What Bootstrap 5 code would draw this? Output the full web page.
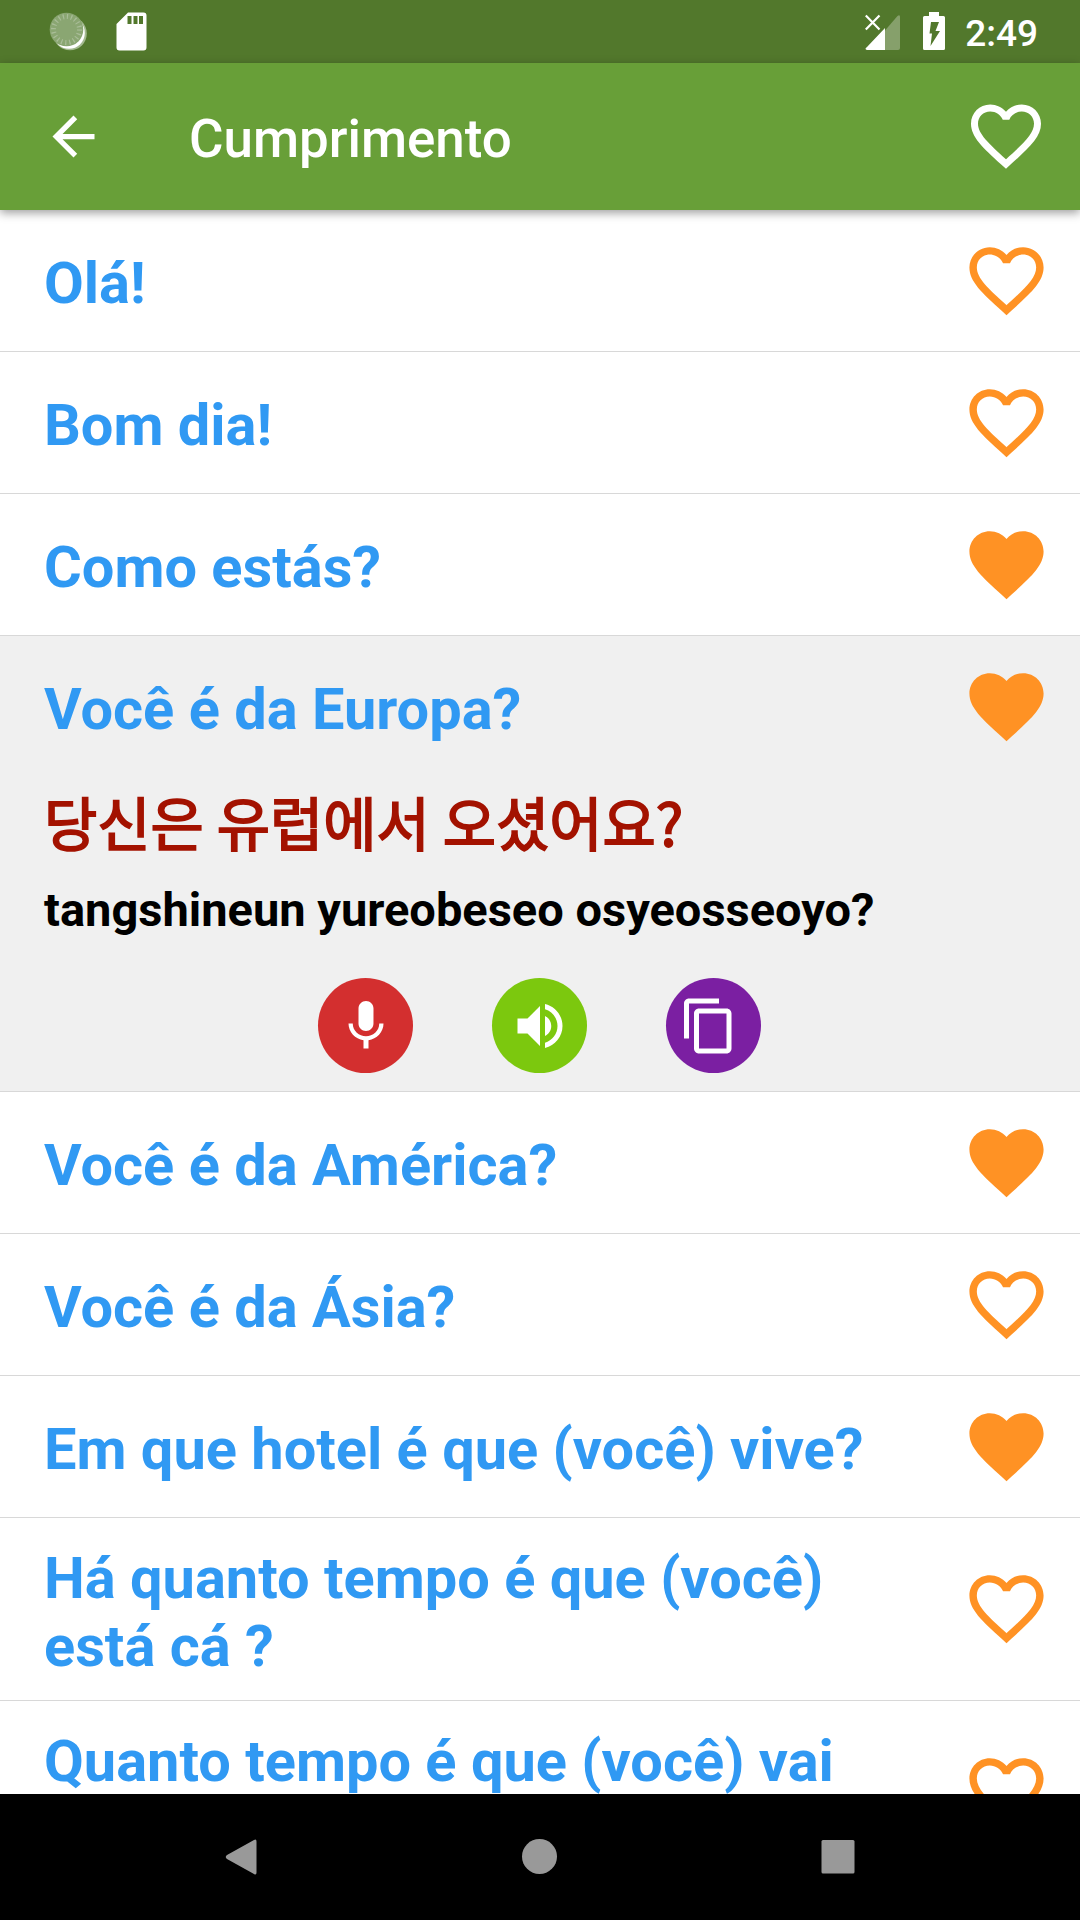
<!DOCTYPE html>
<html lang="pt">
<head>
<meta charset="utf-8">
<meta name="viewport" content="width=device-width, initial-scale=1">
<title>Cumprimento</title>
<link href="https://cdn.jsdelivr.net/npm/bootstrap@5.3.0/dist/css/bootstrap.min.css" rel="stylesheet">
<style>
body{font-family:Roboto,"Noto Sans CJK KR",sans-serif;background:#fff}
svg{display:block;flex:none}
.screen{width:1080px;height:1920px}
.status{height:63px;background:#52782c;padding:0 42px 0 49px}
.clock{font-size:37px;font-weight:500;line-height:43px;margin-left:20px;padding-top:3px}
.sdcard{margin-left:28px}
.battery{margin-left:22px}
.appbar{height:147px;background:#689f38;padding:0 32px 0 42px;box-shadow:0 3px 9px rgba(0,0,0,.38);z-index:2}
.appbar .fav{margin-bottom:2px}
.title{font-size:52.9px;font-weight:500;line-height:62px;margin-left:84px;padding-top:5px}
.phrases{min-height:0}
.phrase{border-bottom:1px solid #d8d8d8}
.head{min-height:141px;padding:23px 29px 23px 44px}
.pt{font-size:57.75px;line-height:68px;font-weight:700;color:#3099f3;position:relative;top:2px;width:840px}
.two .pt{top:3px}
.two .heart{margin-bottom:1px}
.heart{color:#ff9224}
.opened{background:#f0f0f0;height:456px}
.ko{font-family:"Noto Sans CJK KR",sans-serif;font-size:57.9px;line-height:86px;font-weight:400;color:#a31200;-webkit-text-stroke:1.8px #a31200;padding:1px 0 0 44px}
.roman{font-size:47px;line-height:56px;font-weight:700;color:#000;padding:18px 0 0 44px}
.acts{gap:79px;padding:0 1px 18px 0}
.act{width:95px;height:95px}
.mic{background:#d32f2f}.vol{background:#7cc80e}.cpy{background:#7b1fa2}
.sysnav{height:126px;color:#999}
</style>
</head>
<body>
<svg width="0" height="0" class="position-absolute">
<symbol id="ho" viewBox="0 0 24 24"><path fill="currentColor" d="M16.5 3c-1.74 0-3.41.81-4.5 2.09C10.91 3.81 9.24 3 7.5 3 4.42 3 2 5.42 2 8.5c0 3.78 3.4 6.86 8.55 11.54L12 21.35l1.45-1.32C18.6 15.36 22 12.28 22 8.5 22 5.42 19.58 3 16.5 3zm-4.4 15.55l-.1.1-.1-.1C7.14 14.24 4 11.39 4 8.5 4 6.5 5.5 5 7.5 5c1.54 0 3.04.99 3.57 2.36h1.87C13.46 5.99 14.96 5 16.5 5c2 0 3.5 1.5 3.5 3.5 0 2.89-3.14 5.74-7.9 10.05z"/></symbol>
<symbol id="hf" viewBox="0 0 24 24"><path fill="currentColor" d="M12 21.35l-1.45-1.32C5.4 15.36 2 12.28 2 8.5 2 5.42 4.42 3 7.5 3c1.74 0 3.41.81 4.5 2.09C13.09 3.81 14.76 3 16.5 3 19.58 3 22 5.42 22 8.5c0 3.78-3.4 6.86-8.55 11.54L12 21.35z"/></symbol>
</svg>
<div class="screen d-flex flex-column overflow-hidden">
  <div class="status d-flex align-items-center text-white flex-shrink-0">
    <svg width="39" height="63" viewBox="0 0 39 63"><circle cx="21" cy="33.500" r="16.800" fill="#a3b98f"/><circle cx="20" cy="33" r="15.800" fill="#fff"/><circle cx="17.500" cy="29.500" r="16.800" fill="#8aa672"/><circle cx="17.500" cy="29.500" r="13" fill="none" stroke="#a9bd98" stroke-width="5" stroke-dasharray="1.200 2.884"/></svg>
    <svg class="sdcard" width="32" height="63" viewBox="0 0 32 63"><path fill="#fff" fill-rule="evenodd" d="M12 12.500H27.500q3 0 3 3V47.500q0 3-3 3H3.500q-3 0-3-3V24zM11.500 16v8h4v-8zm6 0v8h4v-8zm5.500 0v8h4v-8z"/></svg>
    <svg class="ms-auto" width="36" height="63" viewBox="0 0 36 63"><path fill="#fff" fill-opacity=".3" d="M20 30.500L32.500 16q2.500-2 2.500 1V48q0 2-2 2H20z"/><path fill="#fff" d="M20 28V50H2q-3-1 0-3z"/><path stroke="#fff" stroke-width="2.200" d="M.8 15.500L14.500 29.500M14.500 15.500L.8 29.500"/></svg>
    <svg class="battery" width="22" height="63" viewBox="0 0 22 63"><path fill="#fff" fill-rule="evenodd" d="M6 12h10v4h4.500q1.500 0 1.500 1.500v31q0 1.500-1.500 1.500h-19Q0 50 0 48.500v-31Q0 16 1.500 16H6zM8 22L6.500 33.500H9L7.500 46 17 31H12.500L16 22z"/></svg>
    <span class="clock">2:49</span>
  </div>
  <header class="appbar d-flex align-items-center text-white position-relative flex-shrink-0">
    <svg width="63" height="63" viewBox="0 0 24 24"><path fill="#fff" d="M20 11H7.830l5.590-5.590L12 4l-8 8 8 8 1.410-1.410L7.830 13H20v-2z"/></svg>
    <span class="title">Cumprimento</span>
    <svg class="fav ms-auto" width="84" height="84"><use href="#ho"/></svg>
  </header>
  <main class="phrases flex-grow-1 overflow-hidden">
    <div class="phrase"><div class="head d-flex align-items-center justify-content-between"><div class="pt">Olá!</div><svg class="heart" width="89" height="89"><use href="#ho"/></svg></div></div>
    <div class="phrase"><div class="head d-flex align-items-center justify-content-between"><div class="pt">Bom dia!</div><svg class="heart" width="89" height="89"><use href="#ho"/></svg></div></div>
    <div class="phrase"><div class="head d-flex align-items-center justify-content-between"><div class="pt">Como estás?</div><svg class="heart" width="89" height="89"><use href="#hf"/></svg></div></div>
    <div class="phrase opened d-flex flex-column">
      <div class="head d-flex align-items-center justify-content-between"><div class="pt">Você é da Europa?</div><svg class="heart" width="89" height="89"><use href="#hf"/></svg></div>
      <div class="ko">당신은 유럽에서 오셨어요?</div>
      <div class="roman">tangshineun yureobeseo osyeosseoyo?</div>
      <div class="acts d-flex justify-content-center mt-auto">
        <div class="act mic rounded-circle d-flex align-items-center justify-content-center"><svg width="60" height="60" viewBox="0 0 24 24"><path fill="#fff" d="M12 14c1.660 0 2.990-1.340 2.990-3L15 5c0-1.660-1.340-3-3-3S9 3.340 9 5v6c0 1.660 1.340 3 3 3zm5.300-3c0 3-2.540 5.100-5.300 5.100S6.700 14 6.700 11H5c0 3.410 2.720 6.230 6 6.720V21h2v-3.280c3.280-.48 6-3.300 6-6.720h-1.700z"/></svg></div>
        <div class="act vol rounded-circle d-flex align-items-center justify-content-center"><svg width="60" height="60" viewBox="0 0 24 24"><path fill="#fff" d="M3 9v6h4l5 5V4L7 9H3zm13.500 3c0-1.770-1.020-3.290-2.500-4.030v8.050c1.480-.73 2.500-2.250 2.500-4.020zM14 3.230v2.060c2.890.86 5 3.540 5 6.710s-2.110 5.850-5 6.710v2.060c4.010-.91 7-4.490 7-8.770s-2.990-7.860-7-8.770z"/></svg></div>
        <div class="act cpy rounded-circle d-flex align-items-center justify-content-center"><svg width="60" height="60" viewBox="2 0 24 24"><path fill="#fff" d="M16 1H4c-1.100 0-2 .9-2 2v14h2V3h12V1zm3 4H8c-1.100 0-2 .9-2 2v14c0 1.100.9 2 2 2h11c1.100 0 2-.9 2-2V7c0-1.100-.9-2-2-2zm0 16H8V7h11v14z"/></svg></div>
      </div>
    </div>
    <div class="phrase"><div class="head d-flex align-items-center justify-content-between"><div class="pt">Você é da América?</div><svg class="heart" width="89" height="89"><use href="#hf"/></svg></div></div>
    <div class="phrase"><div class="head d-flex align-items-center justify-content-between"><div class="pt">Você é da Ásia?</div><svg class="heart" width="89" height="89"><use href="#ho"/></svg></div></div>
    <div class="phrase"><div class="head d-flex align-items-center justify-content-between"><div class="pt">Em que hotel é que (você) vive?</div><svg class="heart" width="89" height="89"><use href="#hf"/></svg></div></div>
    <div class="phrase two"><div class="head d-flex align-items-center justify-content-between"><div class="pt">Há quanto tempo é que (você)<br>está cá ?</div><svg class="heart" width="89" height="89"><use href="#ho"/></svg></div></div>
    <div class="phrase two"><div class="head d-flex align-items-center justify-content-between"><div class="pt">Quanto tempo é que (você) vai<br>&nbsp;</div><svg class="heart" width="89" height="89"><use href="#ho"/></svg></div></div>
  </main>
  <nav class="sysnav bg-black d-flex align-items-center justify-content-center flex-shrink-0">
    <svg width="896" height="40" viewBox="92 1837 896 40"><g fill="#999"><path d="M254 1840q2.500-1.500 2.500 1.500v31q0 3-2.500 1.500L227 1859q-2.500-2 0-4z"/><circle cx="539.500" cy="1856.500" r="17.500"/><rect x="821.500" y="1840" width="33" height="33.500" rx="1.500"/></g></svg>
  </nav>
</div>
<script src="https://cdn.jsdelivr.net/npm/bootstrap@5.3.0/dist/js/bootstrap.bundle.min.js"></script>
</body>
</html>
